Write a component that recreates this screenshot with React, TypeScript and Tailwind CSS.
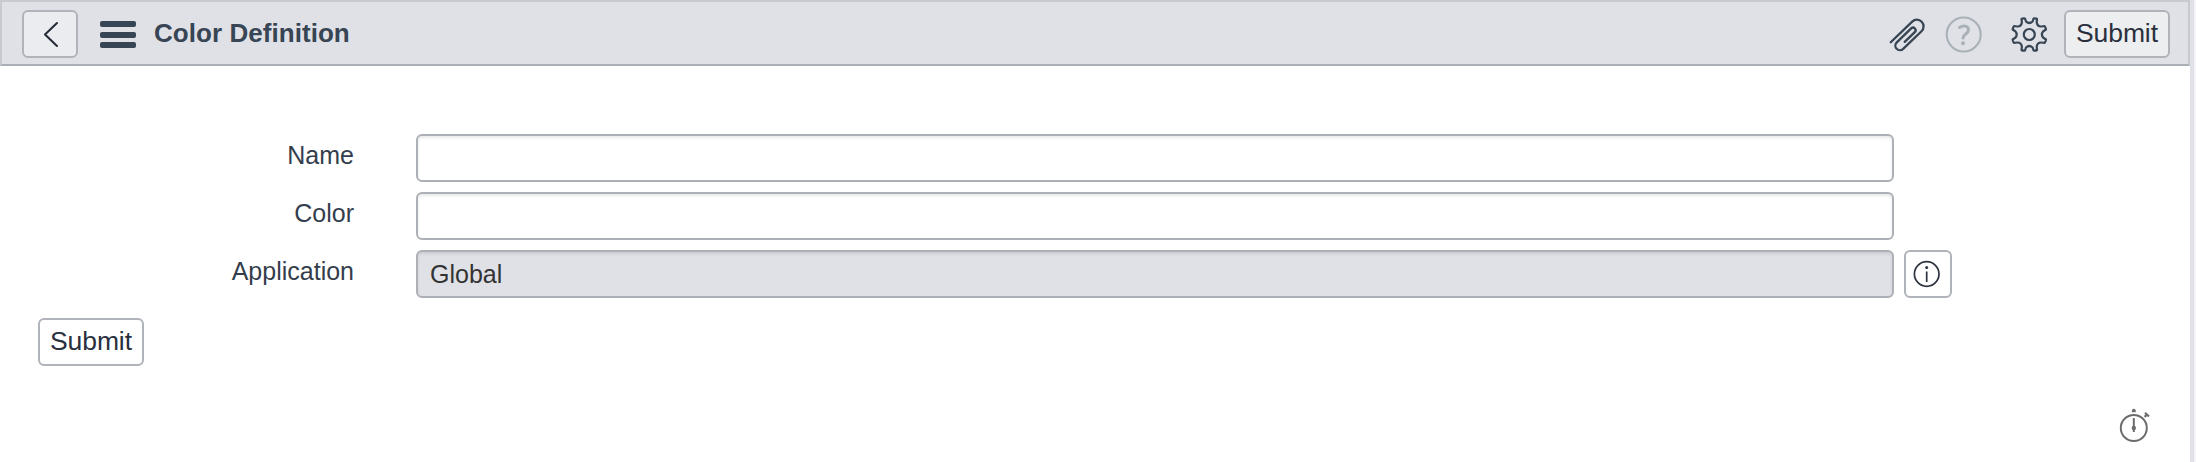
import type { ReactNode } from "react";

function SubmitButton({ className }: { className: string }) {
  return (
    <button
      className={`h-12 w-[106px] shrink-0 rounded-[6px] border-2 border-[#b0b3ba] pb-[2px] text-[26.5px] leading-none tracking-[-0.1px] text-[#2a303d] ${className}`}
    >
      Submit
    </button>
  );
}

function Field({ label, value, readOnly, children }: { label: string; value: string; readOnly?: boolean; children?: ReactNode }) {
  return (
    <div className="flex h-12">
      <label className="w-[354px] pt-[7px] text-right text-[25px] leading-[28px] text-[#343d4c]">{label}</label>
      <input
        defaultValue={value}
        readOnly={readOnly}
        className={`ml-[62px] h-12 w-[1478px] rounded-[6px] border-2 border-[#adb1b7] px-3 text-[25px] text-[#333] shadow-[inset_0_2px_3px_rgba(0,0,0,0.09)] outline-none ${readOnly ? "bg-[#e0e1e6]" : "bg-white"}`}
      />
      {children}
    </div>
  );
}

export default function App() {
  return (
    <div className="flex h-[462px] w-[2196px] overflow-hidden bg-white font-['Liberation_Sans',Arial,sans-serif]">
      <main className="flex w-[2190px] shrink-0 flex-col">
        <header className="flex h-[66px] shrink-0 items-start border-2 border-[#c8cad0] border-b-[#abb0b6] bg-[#e0e1e6] pt-2 pl-5 pr-[18px]">
          <button aria-label="Back" className="h-12 w-14 rounded-[6px] border-2 border-[#b0b3ba] bg-[#ebecef]">
            <svg width="52" height="44" viewBox="0 0 52 44" fill="none" stroke="#232a35" strokeWidth="2" strokeLinecap="round" strokeLinejoin="round">
              <path d="M33 11 L21 22.5 L33 34" />
            </svg>
          </button>
          <button aria-label="Menu" className="mt-[11px] ml-[22px] flex h-[27px] w-9 flex-col justify-between">
            <span className="block h-[6px] w-9 rounded-[2px] bg-[#384554]" />
            <span className="block h-[6px] w-9 rounded-[2px] bg-[#384554]" />
            <span className="block h-[6px] w-9 rounded-[2px] bg-[#384554]" />
          </button>
          <h1 className="ml-[18px] pt-2 text-[26px] leading-[30px] font-bold tracking-[0.05px] text-[#384554]">Color Definition</h1>
          <div className="ml-auto flex">
            <svg width="44" height="48" viewBox="1886 10 44 48" fill="none" stroke="#384554" strokeWidth="2.3" strokeLinecap="round" strokeLinejoin="round">
              <path
                transform="translate(1908.3 34.8) rotate(-44)"
                d="M-17.8 -6.8 H12 A6.7 6.7 0 0 1 12 6.6 H-13.5 A4.6 4.6 0 0 1 -13.5 -2.6 H6.5 A2.6 2.6 0 0 1 6.5 2.6 H-7.5"
              />
            </svg>
            <svg className="ml-[14px]" width="40" height="48" viewBox="1944 10 40 48" fill="none" stroke="#a9b1b8" strokeLinecap="round">
              <circle cx="1963.7" cy="34.5" r="17" strokeWidth="2.1" />
              <path d="M1959.5 27.5 C1963 25 1968.5 25.5 1968.5 30 C1968.5 34 1963 34 1963 38" strokeWidth="3" />
              <circle cx="1963" cy="43.3" r="2" fill="#a9b1b8" stroke="none" />
            </svg>
            <svg className="ml-6" width="44" height="48" viewBox="2008 10 44 48" fill="none" stroke="#384554" strokeWidth="2.2" strokeLinejoin="round">
              <circle cx="2029.3" cy="34.5" r="5.5" />
              <path d="M2021.5 19 Q2023 18 2025 18.5 L2026 21.5 Q2029.3 24.5 2032.6 21.5 L2033.6 18.5 Q2035.6 18 2037 19 L2036.7 22.5 Q2037.5 26.8 2041.5 26.5 L2044.6 26 Q2045.6 27.5 2046 29.5 L2043.3 31.2 Q2040.5 34.5 2043.3 37.8 L2046 39.5 Q2045.6 41.5 2044.6 43 L2041.5 42.5 Q2037.5 42.2 2036.7 46.5 L2037 50 Q2035.6 51 2033.6 50.5 L2032.6 47.5 Q2029.3 44.5 2026 47.5 L2025 50.5 Q2023 51 2021.5 50 L2021.9 46.5 Q2021.1 42.2 2017.1 42.5 L2014 43 Q2013 41.5 2012.6 39.5 L2015.3 37.8 Q2018.1 34.5 2015.3 31.2 L2012.6 29.5 Q2013 27.5 2014 26 L2017.1 26.5 Q2021.1 26.8 2021.9 22.5 Z" />
            </svg>
            <SubmitButton className="ml-3 bg-[#edeef0]" />
          </div>
        </header>
        <section className="mt-[68px] flex flex-col gap-[10px]">
          <Field label="Name" value="" />
          <Field label="Color" value="" />
          <Field label="Application" value="Global" readOnly>
            <button aria-label="Information" className="ml-[10px] h-12 w-12 rounded-[6px] border-2 border-[#b0b3ba] bg-white">
              <svg width="44" height="44" viewBox="0 0 44 44" fill="none" stroke="#2d3440">
                <circle cx="20.7" cy="22" r="12.3" strokeWidth="1.7" />
                <path d="M20.7 19.5 V30" strokeWidth="1.7" />
                <circle cx="20.7" cy="15.5" r="1.5" fill="#2d3440" stroke="none" />
              </svg>
            </button>
          </Field>
        </section>
        <SubmitButton className="mt-5 ml-[38px] bg-white" />
        <svg className="mt-[38px] mr-9 self-end" width="40" height="44" viewBox="2114 404 40 44" fill="none" stroke="#6c6c6c">
          <circle cx="2133.8" cy="428" r="13" strokeWidth="2" />
          <path d="M2133.8 418 V432" strokeWidth="2" />
          <circle cx="2133.8" cy="428" r="2.2" fill="#6c6c6c" stroke="none" />
          <path d="M2131.9 412.3 V410 Q2133.8 407.3 2135.7 410 V412.3 Z" fill="#6c6c6c" stroke="none" />
          <path d="M2145 412.8 L2149 416.5 M2147 414.6 L2144.5 416.8" strokeWidth="2.2" />
        </svg>
      </main>
      <div className="w-[4px] shrink-0 bg-[#e0e1e6]" />
      <div className="w-[2px] shrink-0 bg-[#f3f3f6]" />
    </div>
  );
}
